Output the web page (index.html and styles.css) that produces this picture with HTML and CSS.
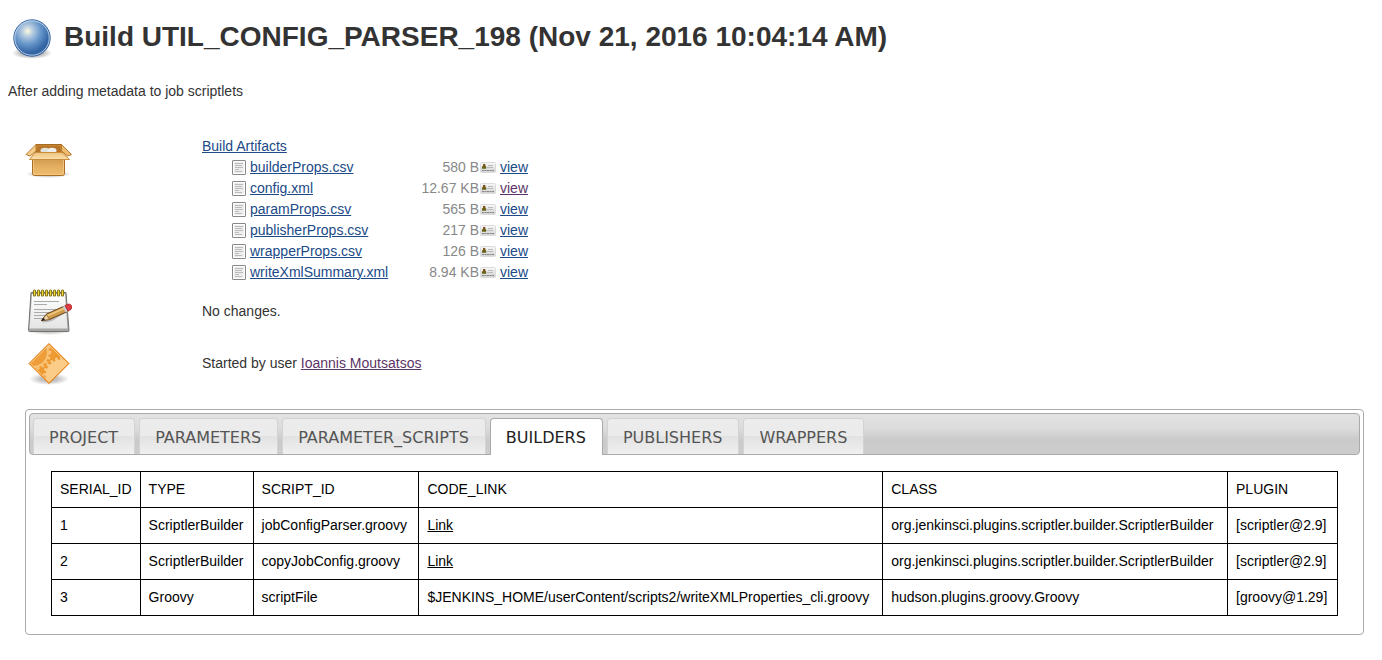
FILE: index.html
```html
<!DOCTYPE html>
<html lang="en">
<head>
<meta charset="utf-8">
<title>Build UTIL_CONFIG_PARSER_198</title>
<link rel="stylesheet" href="styles.css">
</head>
<body>
<svg class="defs" aria-hidden="true">
  <defs>
    <linearGradient id="cardFill" x1="0" y1="0" x2="0" y2="1">
      <stop offset="0" stop-color="#f8f8f8"/><stop offset="1" stop-color="#d2d2d2"/>
    </linearGradient>
    <symbol id="file" viewBox="0 0 16 16">
      <rect x="1.500" y="0.500" width="13" height="14" rx="0.500" fill="#f7f7f7" stroke="#888"/>
      <rect x="2.500" y="1.500" width="11" height="12" fill="#eee" stroke="#fff"/>
      <path d="M4 3.500h8M4 5.500h7M4 7.500h8M4 9.500h4M4 11.500h7" stroke="#bbb" fill="none"/>
    </symbol>
    <symbol id="card" viewBox="0 1 16 16">
      <rect x="0.500" y="3.500" width="15" height="10" rx="1" fill="url(#cardFill)" stroke="#dcdcdc"/>
      <path d="M2 9.800V7.500L3 7V5.500Q4.200 4 5.300 5.500V7L6.200 7.600V9.800Z" fill="#666414"/>
      <path d="M3.200 5.300h2v2h-2z" fill="#8b4d22"/>
      <path d="M8 6.500h5M7 8.500h6" stroke="#bbb" fill="none"/>
      <path d="M2 11.500h12" stroke="#888" stroke-dasharray="2 0.500" fill="none"/>
    </symbol>
  </defs>
</svg>

<header class="title">
  <svg class="icon" viewBox="0 0 48 48" aria-hidden="true">
    <defs>
      <radialGradient id="ball" cx="0.380" cy="0.310" r="0.600">
        <stop offset="0" stop-color="#fbf9df"/><stop offset="0.250" stop-color="#b5cbe0"/>
        <stop offset="0.600" stop-color="#6797ca"/><stop offset="1" stop-color="#3465a4"/>
      </radialGradient>
      <radialGradient id="shade"><stop offset="0.400" stop-color="#000" stop-opacity="0.500"/><stop offset="1" stop-color="#000" stop-opacity="0"/></radialGradient>
    </defs>
    <ellipse cx="24" cy="39" rx="20" ry="6" fill="url(#shade)" opacity="0.700"/>
    <circle cx="24" cy="24" r="18.200" fill="url(#ball)" stroke="#3465a4"/>
    <circle cx="24" cy="24" r="17.200" fill="none" stroke="#d2dfef" stroke-opacity="0.800"/>
  </svg>
  <h1>Build UTIL_CONFIG_PARSER_198 (Nov 21, 2016 10:04:14 AM)</h1>
</header>

<p class="description">After adding metadata to job scriptlets</p>

<main>
<section class="summary">
  <svg class="icon" viewBox="0 0 48 48" aria-hidden="true">
    <defs>
      <linearGradient id="boxFront" x1="0" y1="0" x2="0" y2="1"><stop offset="0" stop-color="#cd954c"/><stop offset="0.500" stop-color="#e3ae60"/><stop offset="1" stop-color="#eebd70"/></linearGradient>
      <linearGradient id="flap" x1="0" y1="0" x2="0" y2="1"><stop offset="0" stop-color="#efc27c"/><stop offset="1" stop-color="#fbe0ac"/></linearGradient>
    </defs>
    <ellipse cx="24.500" cy="38" rx="23" ry="4" fill="url(#shade)" opacity="0.500"/>
    <path d="M12 8.500h25.500l2 8H10z" fill="#c68631" stroke="#a46a20"/>
    <path d="M14 10h22l1 6H12z" fill="#b8752a"/>
    <ellipse cx="21" cy="14.500" rx="4.500" ry="2.800" fill="#e2e2dc"/>
    <ellipse cx="28" cy="14.500" rx="4.500" ry="2.800" fill="#eeeeea"/>
    <path d="M8.500 21h32v16.500q0 2-2 2h-28q-2 0-2-2z" fill="url(#boxFront)" stroke="#a96c20"/>
    <path d="M9.500 24v13q0 1.500 1.500 1.500h27q1.500 0 1.500-1.500V24" fill="none" stroke="#f7d08c" stroke-opacity="0.700"/>
    <path d="M12 8.500L2 18.500l4 1.500 6-5z" fill="#f5ce8d" stroke="#b87a2b"/>
    <path d="M37.500 8.500l10 10-4 1.500-6-5z" fill="#eebc70" stroke="#b87a2b"/>
    <path d="M11 16.500h27l7.500 7h-40z" fill="url(#flap)" stroke="#c98d40"/>
  </svg>
  <div class="artifacts">
    <a href="#artifacts">Build Artifacts</a>
    <table class="files">
      <tr><td><svg class="small" aria-hidden="true"><use href="#file"/></svg></td><td class="name"><a href="#f1">builderProps.csv</a></td><td class="size">580 B</td><td><svg class="small" aria-hidden="true"><use href="#card"/></svg></td><td class="view"><a href="#v1">view</a></td></tr>
      <tr><td><svg class="small" aria-hidden="true"><use href="#file"/></svg></td><td class="name"><a href="#f2">config.xml</a></td><td class="size">12.67 KB</td><td><svg class="small" aria-hidden="true"><use href="#card"/></svg></td><td class="view"><a class="seen" href="#v2">view</a></td></tr>
      <tr><td><svg class="small" aria-hidden="true"><use href="#file"/></svg></td><td class="name"><a href="#f3">paramProps.csv</a></td><td class="size">565 B</td><td><svg class="small" aria-hidden="true"><use href="#card"/></svg></td><td class="view"><a href="#v3">view</a></td></tr>
      <tr><td><svg class="small" aria-hidden="true"><use href="#file"/></svg></td><td class="name"><a href="#f4">publisherProps.csv</a></td><td class="size">217 B</td><td><svg class="small" aria-hidden="true"><use href="#card"/></svg></td><td class="view"><a href="#v4">view</a></td></tr>
      <tr><td><svg class="small" aria-hidden="true"><use href="#file"/></svg></td><td class="name"><a href="#f5">wrapperProps.csv</a></td><td class="size">126 B</td><td><svg class="small" aria-hidden="true"><use href="#card"/></svg></td><td class="view"><a href="#v5">view</a></td></tr>
      <tr><td><svg class="small" aria-hidden="true"><use href="#file"/></svg></td><td class="name"><a href="#f6">writeXmlSummary.xml</a></td><td class="size">8.94 KB</td><td><svg class="small" aria-hidden="true"><use href="#card"/></svg></td><td class="view"><a href="#v6">view</a></td></tr>
    </table>
  </div>

  <svg class="icon" viewBox="0 0 48 48" aria-hidden="true">
    <defs>
      <linearGradient id="paper" x1="0" y1="0" x2="0" y2="1"><stop offset="0" stop-color="#fff"/><stop offset="1" stop-color="#e4e4e4"/></linearGradient>
    </defs>
    <ellipse cx="25" cy="43" rx="22" ry="4" fill="url(#shade)" opacity="0.400"/>
    <path d="M7 4.500h35l3 38q0 1-1 1H5.500q-1 0-1-1z" fill="#a6a6a4" stroke="#73736f"/>
    <path d="M8 6h33l2.500 34.500h-38z" fill="url(#paper)"/>
    <path d="M10 13.500h25M10 16.500h13M10 21.500h25M10 24.500h25M10 27.500h25M10 30.500h12" stroke="#aaa" fill="none"/>
    <path d="M10.500 3v4M14.500 3v4M18.500 3v4M22.500 3v4M26.500 3v4M30.500 3v4M34.500 3v4M38.500 3v4" stroke="#74620a" stroke-width="3.200" stroke-linecap="round"/>
    <path d="M10.500 3v4M14.500 3v4M18.500 3v4M22.500 3v4M26.500 3v4M30.500 3v4M34.500 3v4M38.500 3v4" stroke="#e9d33d" stroke-width="1.500" stroke-linecap="round"/>
    <path d="M18 33q8 0 12-3l12-7" stroke="#000" stroke-opacity="0.200" stroke-width="3" fill="none"/>
    <path d="M17.500 32.500l5-6.500 18-8 3 5.500-18 8z" fill="#cf9b4b" stroke="#6b471c"/>
    <path d="M23 28l17-7.500" stroke="#f0ca82" stroke-width="1.500"/>
    <path d="M17.500 32.500l5-6 3 5z" fill="#f1d2a3" stroke="#6b471c" stroke-width="0.600"/>
    <path d="M17 33l2.500-3.500 1.500 2.600z" fill="#222"/>
    <path d="M38.500 18.700l2.500-1 3 5.500-2.500 1.100z" fill="#ccc"/>
    <path d="M41 17.500l3-1.400q2.500-.5 3.500 1.500 1 2.500-.5 3.700l-3 2z" fill="#df3c44" stroke="#9e2020" stroke-width="0.700"/>
  </svg>
  <div class="note">No changes.</div>

  <svg class="icon" viewBox="0 0 48 48" aria-hidden="true">
    <defs>
      <linearGradient id="orange" x1="0" y1="0" x2="1" y2="1"><stop offset="0.200" stop-color="#f0a040"/><stop offset="0.800" stop-color="#e9921f"/></linearGradient>
      <clipPath id="diamond"><path d="M25 5l18.500 18.500L25 42 6.500 23.500z"/></clipPath>
    </defs>
    <ellipse cx="25" cy="39" rx="20" ry="6" fill="url(#shade)" opacity="0.500"/>
    <path d="M25 3.500l20 20L25 43.500 5 23.500z" fill="url(#orange)" stroke="#e77c12" stroke-linejoin="round"/>
    <g clip-path="url(#diamond)">
      <circle cx="9" cy="12" r="15" fill="none" stroke="#f9c47a" stroke-width="2"/>
      <circle cx="9" cy="12" r="17" fill="none" stroke="#f9c47a" stroke-width="2.500" stroke-dasharray="2.500 2.500"/>
      <circle cx="38" cy="36" r="16.500" fill="#fbcb88"/>
      <circle cx="38" cy="36" r="17.500" fill="none" stroke="#fbcb88" stroke-width="3" stroke-dasharray="2.500 2.500"/>
    </g>
    <path d="M25 5l18.500 18.500L25 42 6.500 23.500z" fill="none" stroke="#ffd394" stroke-opacity="0.750"/>
  </svg>
  <div class="note">Started by user <a class="seen" href="#user">Ioannis Moutsatsos</a></div>
</section>

<section class="panel">
  <nav class="tabs">
    <a href="#project">PROJECT</a>
    <a href="#parameters">PARAMETERS</a>
    <a href="#parameter-scripts">PARAMETER_SCRIPTS</a>
    <a class="active" href="#builders" aria-current="true">BUILDERS</a>
    <a href="#publishers">PUBLISHERS</a>
    <a href="#wrappers">WRAPPERS</a>
  </nav>
  <div class="content">
    <table class="builders">
      <colgroup><col class="c-id"><col class="c-type"><col class="c-script"><col class="c-code"><col class="c-class"><col class="c-plugin"></colgroup>
      <thead><tr><th>SERIAL_ID</th><th>TYPE</th><th>SCRIPT_ID</th><th>CODE_LINK</th><th>CLASS</th><th>PLUGIN</th></tr></thead>
      <tbody>
        <tr><td>1</td><td>ScriptlerBuilder</td><td>jobConfigParser.groovy</td><td><a href="#s1">Link</a></td><td>org.jenkinsci.plugins.scriptler.builder.ScriptlerBuilder</td><td>[scriptler@2.9]</td></tr>
        <tr><td>2</td><td>ScriptlerBuilder</td><td>copyJobConfig.groovy</td><td><a href="#s2">Link</a></td><td>org.jenkinsci.plugins.scriptler.builder.ScriptlerBuilder</td><td>[scriptler@2.9]</td></tr>
        <tr><td>3</td><td>Groovy</td><td>scriptFile</td><td>$JENKINS_HOME/userContent/scripts2/writeXMLProperties_cli.groovy</td><td>hudson.plugins.groovy.Groovy</td><td>[groovy@1.29]</td></tr>
      </tbody>
    </table>
  </div>
</section>
</main>
</body>
</html>
```
FILE: styles.css
```css
* { box-sizing: border-box; }

body {
  margin: 0;
  padding: 14px 8px 24px;
  background: #fff;
  color: #333;
  font: 14px/21px "Liberation Sans", Arial, sans-serif;
}

a { color: #204a87; }
a.seen { color: #5c3566; }

.defs { position: absolute; width: 0; height: 0; }
.icon { display: block; width: 48px; height: 48px; }
.small { display: block; width: 16px; height: 16px; }

.title { display: flex; align-items: center; gap: 8px; }
h1 { margin: 0; padding-bottom: 2px; font-size: 28px; line-height: 36px; }

.description { margin: 19px 0 34px; }

.summary {
  display: grid;
  grid-template-columns: 48px 1fr;
  column-gap: 130px;
  row-gap: 4px;
  padding-left: 16px;
}
.note { padding-top: 13px; }
.artifacts { padding-bottom: 1px; }

.files { margin-left: 29px; border-collapse: collapse; }
.files td { padding: 0; height: 21px; }
.files .name { width: 150px; padding-left: 3px; }
.files .size { width: 83px; padding-right: 1px; color: #888; text-align: right; }
.files .view { padding-left: 4px; }

.panel {
  margin: 21px 10px 0 17px;
  padding: 3px;
  border: 1px solid #aaa;
  border-radius: 4px;
}
.tabs {
  display: flex;
  gap: 4px;
  padding: 4px 3px 0;
  border: 1px solid #aaa;
  border-radius: 4px;
  background: linear-gradient(#e3e3e3 0%, #dcdcdc 35%, #cacaca 65%, #cdcdcd 100%);
  font: 16px/24px "DejaVu Sans", Verdana, sans-serif;
}
.tabs a {
  padding: 7px 16px 4px 15px;
  border: 1px solid #d3d3d3;
  border-bottom: 0;
  border-radius: 4px 4px 0 0;
  background: linear-gradient(#ececec 0%, #ebebeb 49%, #e2e2e2 50%, #f0f0f0 100%);
  color: #555;
  text-decoration: none;
}
.tabs .active {
  margin-bottom: -1px;
  border-color: #aaa;
  background: #fff;
  color: #212121;
}

.content { padding: 16px 22px 15px; color: #000; }
.builders { border-collapse: collapse; }
.builders th, .builders td {
  padding: 7px 8px;
  border: 1px solid #000;
  font-weight: normal;
  text-align: left;
  white-space: nowrap;
}
.builders a { color: #000; }
.c-id { width: 88px; }
.c-type { width: 113px; }
.c-script { width: 166px; }
.c-code { width: 464px; }
.c-class { width: 345px; }
.c-plugin { width: 110px; }
```
